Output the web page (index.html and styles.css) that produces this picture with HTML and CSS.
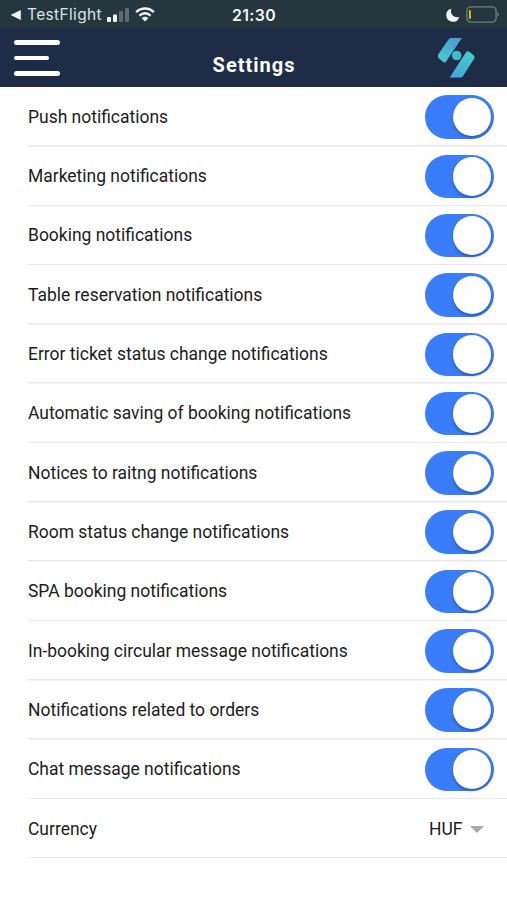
FILE: index.html
```html
<!DOCTYPE html>
<html lang="en">
<head>
<meta charset="utf-8">
<title>Settings</title>
<link rel="stylesheet" href="styles.css">
</head>
<body>
<div class="status">
  <div class="status-left">
    <svg class="back" viewBox="0 0 12 12"><path d="M.6 6 10.800 1v10z"/></svg>
    <span class="app">TestFlight</span>
    <svg class="signal" viewBox="0 0 24 15"><rect x="1" y="10" width="4" height="5" rx="1"/><rect x="7" y="7.500" width="4" height="7.500" rx="1"/><g opacity=".28"><rect x="13" y="4" width="4" height="11" rx="1"/><rect x="19" y="1" width="4" height="14" rx="1"/></g></svg>
    <svg class="wifi" viewBox="0 0 20 15"><path d="M1.200 5.200a12.500 12.500 0 0 1 17.600 0M4.500 8.600a7.900 7.900 0 0 1 11 0" fill="none" stroke="#f2f5f6" stroke-width="2.500"/><path d="M6.700 11.200a4.700 4.700 0 0 1 6.600 0L10 14.600z"/></svg>
  </div>
  <span class="time">21:30</span>
  <div class="status-right">
    <svg class="moon" viewBox="0 0 14 14"><path d="M5.300.7C3.600 6 8 10.200 13.200 8.900A6.600 6.600 0 1 1 5.300.7z"/></svg>
    <svg class="battery" viewBox="0 0 34 17"><rect x=".9" y=".9" width="29.200" height="15.200" rx="4" fill="none" stroke="#737d82" stroke-width="1.400"/><path d="M31.500 6.300c2 .7 2 3.700 0 4.400z" fill="#737d82"/><rect x="3" y="4" width="1.800" height="9" rx=".9" fill="#f0c51c"/></svg>
  </div>
</div>
<header class="header">
  <div class="menu"><i></i><i class="short"></i><i></i></div>
  <h1>Settings</h1>
  <svg class="logo" viewBox="0 0 38 41"><defs><linearGradient id="g" x1="0" y1="1" x2=".8" y2="0"><stop offset="0" stop-color="#43cfc9"/><stop offset="1" stop-color="#4a9bd6"/></linearGradient><linearGradient id="h" x1="0" y1="1" x2=".8" y2="0"><stop offset="0" stop-color="#4a9fdb"/><stop offset="1" stop-color="#42cdc8"/></linearGradient></defs><path fill="url(#g)" d="M14.500 1h10.400L9.300 24.200c-1 1.500-2 1.500-3.300.6l-3.700-3c-1.800-1.500-1.800-3.200-.6-5L11.300 2.700C12.200 1.500 13 1 14.500 1z"/><path fill="url(#h)" d="M29 15.200c1-1.400 2.200-1.200 3.300-.4l4 3.200c1.500 1.300 1.600 2.700.5 4.300L26 39.100c-.8 1.200-1.500 1.500-2.700 1.500H12.700z"/><circle cx="19.700" cy="18.500" r="4.800" fill="#44b9cd"/></svg>
</header>
<main class="list">
  <label class="row"><span>Push notifications</span><b class="toggle"></b></label>
  <label class="row"><span>Marketing notifications</span><b class="toggle"></b></label>
  <label class="row"><span>Booking notifications</span><b class="toggle"></b></label>
  <label class="row"><span>Table reservation notifications</span><b class="toggle"></b></label>
  <label class="row"><span>Error ticket status change notifications</span><b class="toggle"></b></label>
  <label class="row"><span>Automatic saving of booking notifications</span><b class="toggle"></b></label>
  <label class="row"><span>Notices to raitng notifications</span><b class="toggle"></b></label>
  <label class="row"><span>Room status change notifications</span><b class="toggle"></b></label>
  <label class="row"><span>SPA booking notifications</span><b class="toggle"></b></label>
  <label class="row"><span>In-booking circular message notifications</span><b class="toggle"></b></label>
  <label class="row"><span>Notifications related to orders</span><b class="toggle"></b></label>
  <label class="row"><span>Chat message notifications</span><b class="toggle"></b></label>
  <div class="row"><span>Currency</span><div class="select">HUF<i class="caret"></i></div></div>
</main>
</body>
</html>
```
FILE: styles.css
```css
* { box-sizing: border-box; }
body { margin: 0; height: 900px; overflow: hidden; background: #fff; font-family: Roboto, sans-serif; color: #1c1c1c; }
svg { display: block; flex: none; }
.status { height: 28px; background: #25363f; color: #f2f5f6; fill: #f2f5f6; display: grid; grid-template-columns: 1fr auto 1fr; align-items: center; padding: 2px 7px 0 10px; font-family: Inter, sans-serif; }
.status-left, .status-right { display: flex; align-items: center; }
.status-right { justify-content: flex-end; }
.back { width: 12px; height: 12px; }
.app { width: 75px; margin-left: 5px; font-size: 15.5px; line-height: 26px; letter-spacing: .35px; color: #dce2e4; white-space: nowrap; }
.signal { width: 24px; height: 15px; margin-left: 4px; margin-top: -1px; }
.wifi { width: 20px; height: 15px; margin-left: 5px; margin-top: -1px; }
.time { font-size: 15.8px; font-weight: 600; letter-spacing: .4px; margin-right: 2px; }
.moon { width: 14px; height: 14px; margin: -1px 6px 0 0; }
.battery { width: 34px; height: 17px; margin-top: -2px; }
.header { height: 59px; background: #1e2c48; display: grid; grid-template-columns: 1fr auto 1fr; padding: 0 14px; }
.menu { display: flex; flex-direction: column; gap: 11px; padding-top: 12px; }
.menu i { width: 46px; height: 4.5px; border-radius: 3px; background: #fff; }
.menu .short { width: 35px; }
h1 { margin: 26px 0 0; padding-left: 1px; font-size: 20px; line-height: 23px; font-weight: 700; letter-spacing: 1px; color: #fff; }
.logo { width: 38px; height: 41px; margin: 9px 18px 0 0; justify-self: end; }
.list { padding-left: 28px; }
.row { height: 59.32px; display: flex; align-items: center; justify-content: space-between; padding: 0 13.5px .5px 0; font-size: 17.48px; line-height: 20px; background: linear-gradient(#e9e9e9, #e9e9e9) 0 100% / 100% 1.5px no-repeat; }
.list { padding-top: .4px; }
.toggle { width: 69px; height: 43.5px; border-radius: 22px; background: #397dfa; display: flex; align-items: center; justify-content: flex-end; padding-right: 2.5px; margin-top: .5px; }
.toggle::after { content: ""; width: 38.5px; height: 38.5px; border-radius: 50%; background: #fff; box-shadow: 0 2px 3px rgba(0, 25, 90, .35); }
.select { display: flex; align-items: center; gap: 7px; padding-right: 10px; }
.caret { border: 7px solid transparent; border-top-color: #aaa; border-bottom: 0; margin-top: 1px; }
```
